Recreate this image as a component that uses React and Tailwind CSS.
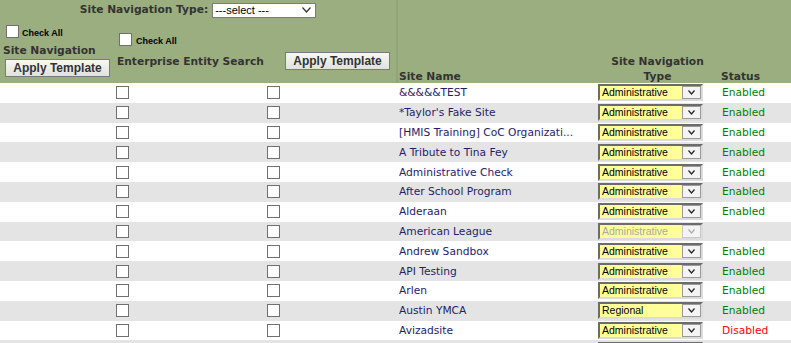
import React from "react";

const sites = [
    { name: "&&&&&TEST", type: "Administrative", status: "Enabled" },
    { name: "*Taylor's Fake Site", type: "Administrative", status: "Enabled" },
    { name: "[HMIS Training] CoC Organizati...", type: "Administrative", status: "Enabled" },
    { name: "A Tribute to Tina Fey", type: "Administrative", status: "Enabled" },
    { name: "Administrative Check", type: "Administrative", status: "Enabled" },
    { name: "After School Program", type: "Administrative", status: "Enabled" },
    { name: "Alderaan", type: "Administrative", status: "Enabled" },
    { name: "American League", type: "Administrative", status: "", locked: true },
    { name: "Andrew Sandbox", type: "Administrative", status: "Enabled" },
    { name: "API Testing", type: "Administrative", status: "Enabled" },
    { name: "Arlen", type: "Administrative", status: "Enabled" },
    { name: "Austin YMCA", type: "Regional", status: "Enabled" },
    { name: "Avizadsite", type: "Administrative", status: "Disabled" },
    { name: "", type: "", status: "" },
];

const verdana = "font-['DejaVu_Sans',Verdana,sans-serif]";
const arial = "font-['Liberation_Sans',Arial,sans-serif]";

function Chevron({ color = "#333", w = 7, h = 4 }) {
    return (
        <svg width={w} height={h + 1} viewBox={`0 0 ${w} ${h + 1}`}>
            <path d={`M0.5 0.5 L${w / 2} ${h} L${w - 0.5} 0.5`} fill="none" stroke={color} strokeWidth="1.2" />
        </svg>
    );
}

function Box({ className = "" }) {
    return <span className={`block h-[13px] w-[13px] shrink-0 border border-[#707070] bg-white ${className}`}></span>;
}

function ApplyButton() {
    return (
        <button
            type="button"
            className={`${arial} flex h-[18px] w-[105px] items-center justify-center border border-[#7a7a7a] bg-gradient-to-b from-[#f7f7f4] to-[#dfe3d9] text-[12px] font-bold leading-none text-[#333]`}
        >
            Apply Template
        </button>
    );
}

function NavSelect({ value, locked }) {
    return (
        <div className="flex h-[17px] w-[105px] shrink-0 border-2 border-t-[#6b6b6b] border-l-[#6b6b6b] border-r-[#dcdcdc] border-b-[#dcdcdc] bg-[#ffff99]">
            <span className={`${arial} flex-1 pl-[2px] text-[10.5px] leading-[13px] ${locked ? "text-[#a8a8a8]" : "text-black"}`}>
                {value}
            </span>
            <span className={`flex w-[19px] items-center justify-center border ${locked ? "border-[#c8c8c8] bg-[#f4f4f4]" : "border-[#9a9a9a] bg-[#f4f4f4]"}`}>
                <Chevron color={locked ? "#aaa" : "#222"} />
            </span>
        </div>
    );
}

export default function App() {
    return (
        <div className={`${verdana} w-[791px] h-[343px] overflow-hidden bg-white`}>

            {/* HEADER */}
            <div className="flex h-[83px] bg-[#9bae80] text-[#333] text-[10.67px] font-bold">

                <div className="w-[396px] shrink-0">
                    <div className="flex h-[19px] items-center justify-center gap-[4px] pt-[1px]">
                        <span>Site Navigation Type:</span>
                        <div className="flex h-[15px] w-[104px] items-center border border-[#7a7a7a] bg-white pl-[2px] pr-[4px]">
                            <span className={`${arial} flex-1 text-[11px] font-normal text-black leading-none`}>---select ---</span>
                            <Chevron color="#333" w={9} h={5} />
                        </div>
                    </div>

                    <div className="flex items-start">
                        <div className="flex w-[113px] flex-col pl-[3px] pt-[6px]">
                            <div className="flex items-end gap-[3px] pl-[3px]">
                                <Box />
                                <span className={`${arial} text-[9px] leading-none text-black`}>Check All</span>
                            </div>
                            <span className="mt-[6px] leading-[13px]">Site Navigation</span>
                            <div className="mt-[2px] pl-[2px]">
                                <ApplyButton />
                            </div>
                        </div>

                        <div className="flex w-[168px] flex-col pl-[4px] pt-[14px]">
                            <div className="flex items-end gap-[4px] pl-[2px]">
                                <Box />
                                <span className={`${arial} text-[9px] leading-none text-black`}>Check All</span>
                            </div>
                            <span className="mt-[9px] leading-[13px]">Enterprise Entity Search</span>
                        </div>

                        <div className="pl-[4px] pt-[33px]">
                            <ApplyButton />
                        </div>
                    </div>
                </div>

                <div className="w-[2px] shrink-0 bg-[#91a577]"></div>

                <div className="flex flex-1 items-end pb-0 leading-[13px]">
                    <span className="w-[200px] pl-[1px]">Site Name</span>
                    <span className="flex w-[122px] flex-col items-center pr-[3px]">
                        <span className="mb-[2px]">Site Navigation</span>
                        <span>Type</span>
                    </span>
                    <span className="pl-[1px]">Status</span>
                </div>
            </div>

            {/* ROWS */}
            {sites.map((site, i) => (
                <div
                    key={i}
                    className={`flex h-[19.8px] items-center text-[10.67px] ${i % 2 === 1 ? "bg-[#e4e4e4]" : "bg-white"}`}
                >
                    <span className="w-[116px] shrink-0"></span>
                    <Box />
                    <span className="w-[138px] shrink-0"></span>
                    <Box />
                    <span className="w-[119px] shrink-0"></span>
                    <span className="w-[199px] shrink-0 truncate pt-[1px] text-[#241c6b]">{site.name}</span>
                    <NavSelect value={site.type} locked={site.locked} />
                    <span
                        className={`pl-[19px] pt-[1px] ${site.status === "Disabled" ? "text-[#ff0000]" : "text-[#008000]"}`}
                    >
                        {site.status}
                    </span>
                </div>
            ))}

        </div>
    );
}
